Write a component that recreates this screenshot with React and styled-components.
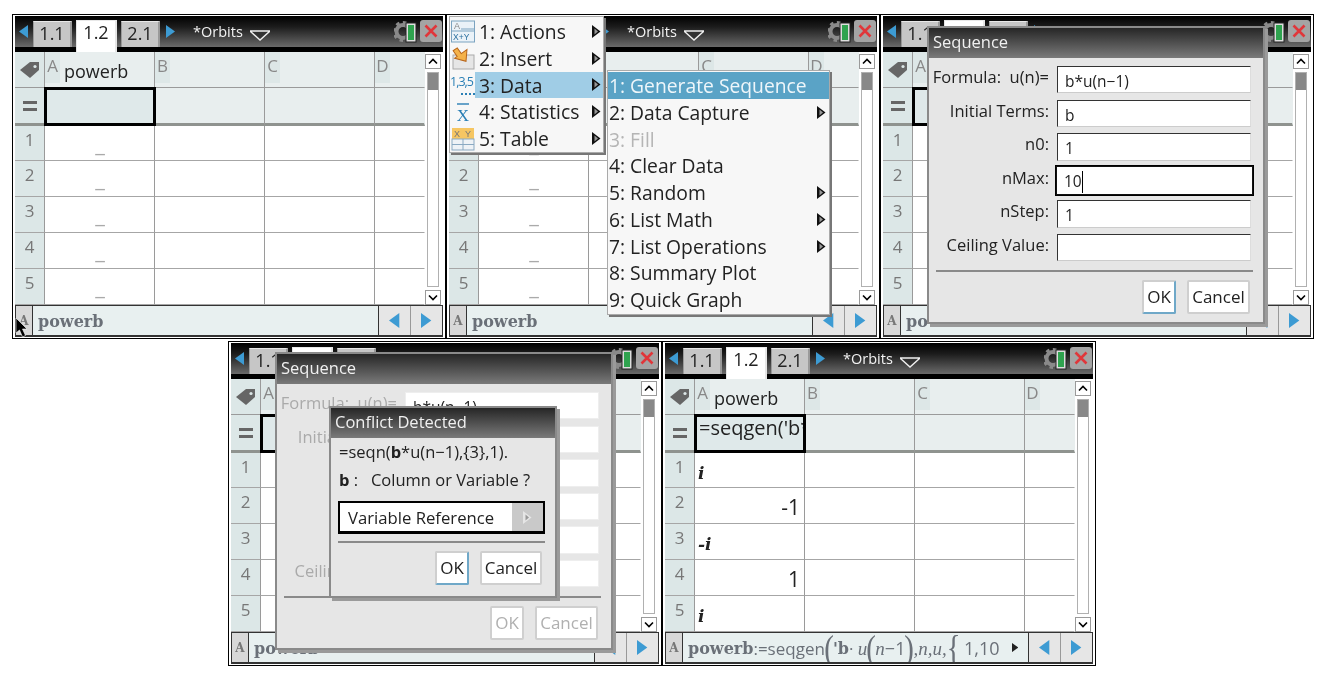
import React from "react";
import styled, { createGlobalStyle } from "styled-components";

const Global = createGlobalStyle`
  html, body { margin: 0; padding: 0; background: #fff; }
  body { font-family: "Open Sans", "DejaVu Sans", sans-serif; }
`;

const Page = styled.div`
  width: 1328px;
  height: 680px;
  padding-top: 14px;
  box-sizing: border-box;
  overflow: hidden;
  display: flex;
  flex-direction: column;
  gap: 2px;
`;
const Row = styled.div`
  display: flex;
  padding-left: ${(p) => p.$left}px;
`;
const Frame = styled.div`
  position: relative;
  width: 434px;
  height: 325px;
  box-sizing: border-box;
  border: 1px solid #000;
  padding: 1px 2px 1px 2px;
  background: #fff;
  display: flex;
  flex-direction: column;
  overflow: hidden;
  filter: blur(0.4px);
`;

/* title bar */
const TitleBar = styled.div`
  height: 31px;
  flex: none;
  border-bottom: 5px solid #000;
  background: linear-gradient(#000 0%, #1c1c1c 35%, #6a6a6a 100%);
  display: flex;
  align-items: flex-end;
  padding-left: 4px;
  position: relative;
`;
const Arrow = styled.svg`
  flex: none;
  align-self: center;
  display: block;
`;
const Tabs = styled.div`
  display: flex;
  gap: 4px;
  margin-left: 5px;
  margin-right: 6px;
  align-items: flex-start;
  height: 100%;
  padding-top: 5px;
  box-sizing: border-box;
`;
const Tab = styled.div`
  width: ${(p) => (p.$on ? 41 : 39)}px;
  height: ${(p) => (p.$on ? 32 : 26)}px;
  margin-top: ${(p) => (p.$on ? -1 : 0)}px;
  box-sizing: border-box;
  background: ${(p) => (p.$on ? "#fff" : "#c6c6c6")};
  border-top: 1px solid #e8e8e8;
  border-right: 2px solid ${(p) => (p.$on ? "#e6e6e6" : "#9a9a9a")};
  border-left: 1px solid ${(p) => (p.$on ? "#e6e6e6" : "#9a9a9a")};
  color: #222;
  font-size: 18px;
  line-height: 22px;
  text-align: center;
  position: relative;
  z-index: 1;
`;
const DocName = styled.div`
  color: #f2f2f2;
  font-size: 14.5px;
  line-height: 20px;
  margin-left: 18px;
  align-self: center;
`;
const Caret = styled.svg`
  margin-left: 7px;
  margin-top: 7px;
  align-self: center;
  flex: none;
`;
const Tools = styled.div`
  margin-left: auto;
  margin-right: 1px;
  align-self: flex-start;
  margin-top: 4px;
  display: flex;
  gap: 2px;
`;
const CloseBox = styled.div`
  width: 22px;
  height: 22px;
  border-radius: 3px;
  background: #a4a4a4;
  display: flex;
  align-items: center;
  justify-content: center;
`;

/* sheet */
const Main = styled.div`
  flex: 1;
  min-height: 0;
  display: flex;
  background: #fff;
`;
const Sheet = styled.div`
  width: 410px;
  display: grid;
  grid-template-columns: 30px 110px 110px 110px 50px;
  grid-template-rows: 36px 38px 34.5px repeat(4, 36.2px);
  overflow: hidden;
`;
const Corner = styled.div`
  background: #dce7e7;
  border-right: 1px solid #9a9a9a;
  border-bottom: 1px solid #9a9a9a;
  display: flex;
  align-items: center;
  justify-content: center;
`;
const EqualCell = styled(Corner)`
  border-bottom: 3px solid #8f938f;
`;
const EqualSign = styled.span`
  width: 14px;
  height: 4px;
  border-top: 3px solid #666;
  border-bottom: 3px solid #666;
`;
const RowHead = styled.div`
  background: #dce7e7;
  border-right: 1px solid #9a9a9a;
  border-bottom: 1px solid #a6a6a6;
  color: #777;
  font-size: 17px;
  text-align: center;
  line-height: 28px;
`;
const ColHead = styled.div`
  background: #e8eeee;
  border-right: 1px solid ${(p) => (p.$last ? "transparent" : "#9a9a9a")};
  border-bottom: 1px solid #9a9a9a;
  display: flex;
  overflow: hidden;
`;
const ColLetter = styled.div`
  width: 15px;
  height: 31px;
  flex: none;
  background: #dde7e7;
  color: #888;
  font-size: 17px;
  line-height: 28px;
  text-align: center;
`;
const ColName = styled.div`
  color: #222;
  font-size: 18px;
  line-height: 38px;
  padding-left: 4px;
`;
const FormulaCell = styled.div`
  background: #e8eeee;
  border-right: 1px solid ${(p) => (p.$last ? "transparent" : "#9a9a9a")};
  border-bottom: 3px solid #8f938f;
  overflow: hidden;
`;
const FormulaHost = styled(FormulaCell)`
  overflow: visible;
`;
const FormulaSel = styled.div`
  background: #dfe9ea;
  border: 3px solid #000;
  margin: -1px -2px -3px -1px;
  height: 39px;
  width: 112px;
  box-sizing: border-box;
  position: relative;
  z-index: 1;
  overflow: hidden;
  white-space: nowrap;
  color: #222;
  font-size: 20px;
  line-height: 21px;
  padding-left: 2px;
`;
const Cell = styled.div`
  background: #fff;
  border-right: 1px solid ${(p) => (p.$last ? "transparent" : "#9a9a9a")};
  border-bottom: 1px solid #a6a6a6;
  color: #222;
  overflow: hidden;
  position: relative;
`;
const EmptyMark = styled.span`
  display: block;
  text-align: center;
  color: #aaa;
  font-size: 22px;
  line-height: 22px;
  padding-top: 6px;
  padding-left: 1px;
`;
const NumberValue = styled.span`
  display: block;
  text-align: right;
  font-size: 21px;
  line-height: 26px;
  padding: 6px 4px 0 0;
`;
const ImagValue = styled.span`
  display: block;
  font-family: "DejaVu Serif", serif;
  font-weight: 700;
  font-style: italic;
  font-size: 17px;
  line-height: 22px;
  padding: 9px 0 0 3px;
`;
const ScrollCol = styled.div`
  flex: 1;
  display: flex;
  flex-direction: column;
  align-items: center;
  padding-top: 2px;
  padding-right: 2px;
`;
const ScrollBtn = styled.div`
  width: 14px;
  height: 13px;
  border: 1px solid #9a9a9a;
  background: #fff;
  display: flex;
  align-items: center;
  justify-content: center;
`;
const Track = styled.div`
  width: 10px;
  height: 216px;
  margin: 3px 0;
  border: 1px solid #b0b0b0;
  background: #fff;
`;
const Thumb = styled.div`
  height: 17px;
  background: #888;
`;

/* bottom bar */
const Bottom = styled.div`
  height: 32px;
  flex: none;
  box-sizing: border-box;
  border: 1px solid #333;
  border-bottom-width: 2px;
  background: #e8f0f0;
  display: flex;
  align-items: stretch;
`;
const RefLabel = styled.div`
  width: 16px;
  flex: none;
  background: #d8d8d8;
  border-right: 1px solid #333;
  color: #777;
  font-family: "DejaVu Serif", serif;
  font-weight: 700;
  font-size: 12px;
  text-align: center;
  line-height: 30px;
`;
const Expr = styled.div`
  flex: 1;
  min-width: 0;
  overflow: hidden;
  padding: 1px 0 0 5px;
  box-sizing: border-box;
  color: #6a7078;
  font-family: "DejaVu Serif", serif;
  font-weight: 700;
  font-size: 16px;
  line-height: 29px;
  white-space: nowrap;
  display: flex;
  align-items: center;
`;
const ExprPlain = styled.span`
  font-weight: 400;
  font-family: "Open Sans", sans-serif;
  font-size: 17px;
`;
const ExprItalic = styled.span`
  font-weight: 400;
  font-style: italic;
  font-family: "Liberation Serif", serif;
  font-size: 19px;
`;
const ExprBig = styled.span`
  font-weight: 400;
  font-family: "Liberation Serif", serif;
  font-size: 36px;
  line-height: 29px;
  margin: 0 -2px;
  transform: scaleX(0.8);
`;
const ExprNum = styled.span`
  font-weight: 400;
  font-family: "Open Sans", sans-serif;
  font-size: 18px;
  margin-left: ${(p) => p.$l || 0}px;
`;
const ExprMore = styled.div`
  flex: none;
  display: flex;
  align-items: center;
  padding: 0 10px 0 6px;
  background: #e8f0f0;
`;
const NavBtn = styled.div`
  width: 31px;
  flex: none;
  background: #e6e6e6;
  border-left: 1px solid ${(p) => (p.$dark ? "#333" : "#999")};
  display: flex;
  align-items: center;
  justify-content: center;
`;

/* menus */
const Menu = styled.div`
  position: absolute;
  z-index: 5;
  background: #f7f7f7;
  box-sizing: border-box;
  left: ${(p) => p.$x}px;
  top: ${(p) => p.$y}px;
  width: ${(p) => p.$w}px;
  border: 1px solid #aaa;
  box-shadow: 2px 2px 0 #777;
  padding: ${(p) => (p.$sub ? "1px 0" : "1px 0 0")};
`;
const MenuItem = styled.div`
  height: 26.8px;
  display: flex;
  align-items: center;
  padding: ${(p) => (p.$sub ? "0 3px 0 1px" : "0 2px 0 0")};
  font-size: 19.3px;
  line-height: 30px;
  color: ${(p) => (p.$off ? "#b5b5b5" : p.$light ? "#eef6fa" : "#222")};
  background: ${(p) => p.$bg || "transparent"};
  white-space: nowrap;
`;
const MenuIcon = styled.div`
  width: 25px;
  flex: none;
  margin-right: 4px;
  background: #f7f7f7;
  align-self: stretch;
  display: flex;
  align-items: center;
  justify-content: center;
`;
const MenuText = styled.span`
  flex: 1;
  padding-top: 1px;
`;
const SubArrow = styled.svg`
  flex: none;
`;

/* dialogs */
const Dialog = styled.div`
  position: absolute;
  z-index: ${(p) => p.$z};
  left: ${(p) => p.$x}px;
  top: ${(p) => p.$y}px;
  width: ${(p) => p.$w}px;
  height: ${(p) => p.$h}px;
  box-sizing: border-box;
  border: 2px solid #8a8a8a;
  box-shadow: 3px 3px 0 #9a9a9a;
  background: #e6e6e6;
  display: flex;
  flex-direction: column;
`;
const DialogTitle = styled.div`
  height: 30px;
  flex: none;
  background: linear-gradient(#262626, #7a7a7a);
  color: #f0f0f0;
  font-size: 16.5px;
  line-height: 28px;
  padding-left: 4px;
`;
const Form = styled.div`
  padding: 8px 12px 0 8px;
  display: flex;
  flex-direction: column;
  gap: 6.2px;
`;
const FormRow = styled.div`
  display: flex;
  height: 27.4px;
  gap: 8px;
`;
const FieldLabel = styled.div`
  width: 112px;
  flex: none;
  text-align: right;
  white-space: pre;
  font-size: 16.5px;
  line-height: 22px;
  color: ${(p) => (p.$dim ? "#aaa" : "#222")};
  display: flex;
  justify-content: flex-end;
`;
const Field = styled.div`
  flex: 1;
  box-sizing: border-box;
  background: #fff;
  border-top: 1px solid #333;
  border-left: 1px solid #333;
  border-right: 1px solid #ddd;
  border-bottom: 1px solid #ccc;
  font-size: 15.5px;
  line-height: 29px;
  padding-left: 7px;
  color: #222;
  white-space: nowrap;
  overflow: hidden;
  ${(p) => p.$dim && "border-color:#eee;"}
  ${(p) => p.$focus && "outline:1px solid #000; border:1px solid #111; margin:-1px; flex:none; width:197px; height:29.4px;"}
`;
const TextCaret = styled.span`
  display: inline-block;
  width: 1px;
  height: 22px;
  background: #000;
  vertical-align: -6px;
`;
const Rule = styled.div`
  height: 2px;
  background: #8a8a8a;
  margin: ${(p) => p.$m};
`;
const Buttons = styled.div`
  display: flex;
  justify-content: flex-end;
  gap: 11px;
  padding-right: ${(p) => p.$r}px;
  margin-top: 8px;
`;
const Button = styled.div`
  width: ${(p) => p.$w}px;
  height: 34px;
  box-sizing: border-box;
  background: #fff;
  border: 2px solid #cfcfcf;
  border-radius: 2px;
  ${(p) => p.$focus && "border-right-color:#6fa8c8; border-bottom-color:#6fa8c8;"}
  color: ${(p) => (p.$dim ? "#b0b0b0" : "#222")};
  font-size: 17px;
  line-height: 30px;
  text-align: center;
`;
const ConflictText = styled.div`
  padding: 0 8px;
  font-size: 16.5px;
  line-height: 20px;
  color: #222;
  white-space: pre;
  margin-top: ${(p) => p.$t}px;
`;
const Strong = styled.b`
  font-weight: 700;
`;
const Select = styled.div`
  margin: 11px 10px 0 7px;
  height: 33px;
  box-sizing: border-box;
  border: 2px solid #000;
  border-bottom-width: 3px;
  background: #fff;
  display: flex;
`;
const SelectText = styled.div`
  flex: 1;
  font-size: 16.7px;
  line-height: 30px;
  padding-left: 8px;
  color: #222;
`;
const SelectBtn = styled.div`
  width: 31px;
  background: #c9c9c9;
  display: flex;
  align-items: center;
  justify-content: center;
`;
const Pointer = styled.svg`
  position: absolute;
  left: 2px;
  bottom: -1px;
  z-index: 6;
`;

/* icons */
const ArrowL = ({ c = "#3d9bd3", s = 1 }) => (
  <Arrow width={9 * s} height={13 * s} viewBox="0 0 9 13">
    <path d="M9 0v13L0 6.5z" fill={c} />
  </Arrow>
);
const ArrowR = ({ c = "#3d9bd3", s = 1 }) => (
  <Arrow width={9 * s} height={13 * s} viewBox="0 0 9 13">
    <path d="M0 0v13l9-6.5z" fill={c} />
  </Arrow>
);
const TagIcon = () => (
  <svg width="20" height="18" viewBox="0 0 20 18">
    <path d="M0 9 10 1h9v8l-9 8z" fill="#666" />
    <circle cx="15" cy="5.5" r="1.6" fill="#dce7e7" />
  </svg>
);
const GearBattery = () => (
  <svg width="24" height="23" viewBox="0 0 24 23">
    <circle cx="9" cy="11.5" r="6.5" fill="none" stroke="#8a8a8a" strokeWidth="4" />
    <circle cx="9" cy="11.5" r="9" fill="none" stroke="#8a8a8a" strokeWidth="3" strokeDasharray="3.5 3.5" />
    <rect x="12" y="3" width="10" height="19" fill="#ddd" stroke="#222" />
    <rect x="14" y="5" width="6" height="15" fill="#2fa34f" />
  </svg>
);
const CloseIcon = () => (
  <svg width="14" height="14" viewBox="0 0 14 14">
    <path d="M1.5 1.5l11 11M12.5 1.5l-11 11" stroke="#e0363a" strokeWidth="2.6" />
  </svg>
);
const ChevUp = () => (
  <svg width="10" height="7" viewBox="0 0 10 7">
    <path d="M1 5.5 5 1.5l4 4" fill="none" stroke="#000" strokeWidth="1.6" />
  </svg>
);
const ChevDown = () => (
  <svg width="10" height="7" viewBox="0 0 10 7">
    <path d="M1 1.5 5 5.5l4-4" fill="none" stroke="#000" strokeWidth="1.6" />
  </svg>
);
const SubTri = ({ c = "#111" }) => (
  <SubArrow width="9" height="13" viewBox="0 0 9 13">
    <path d="M0 0v13l8.5-6.5z" fill={c} />
    <path d="M2.5 3.5v6l3.5-3z" fill="#999" />
  </SubArrow>
);
const ActionsIcon = () => (
  <svg width="24" height="24" viewBox="0 0 24 24">
    <rect x="0.5" y="2" width="23" height="21" fill="#eaf2f8" stroke="#7ba3c0" />
    <path d="M10 10h13M1 12h22" stroke="#7ba3c0" />
    <text x="3" y="10" fontSize="9" fontFamily="Liberation Sans" fill="#888">A</text>
    <text x="2" y="21" fontSize="8.5" fontFamily="Liberation Sans" fill="#2a6f9e">X+Y</text>
  </svg>
);
const InsertIcon = () => (
  <svg width="24" height="24" viewBox="0 0 24 24">
    <rect x="2" y="9" width="21" height="14" fill="#e6e6e6" stroke="#aaa" />
    <path d="M6 1h5v7h7l-7.5 9L3 8h3z" transform="rotate(-35 10 9)" fill="#f4b24a" stroke="#b8651a" />
  </svg>
);
const DataIcon = () => (
  <svg width="24" height="24" viewBox="0 0 24 24">
    <text x="-1" y="13" fontSize="12.5" fontFamily="Open Sans" fill="#2a7fb5" letterSpacing="-1">1,3,5</text>
    <path d="M10 21h2M14 21h2M18 21h2M22 21h2" stroke="#2a7fb5" strokeWidth="2" />
  </svg>
);
const StatsIcon = () => (
  <svg width="24" height="24" viewBox="0 0 24 24">
    <path d="M6 4h12" stroke="#2a7fb5" strokeWidth="1.4" />
    <text x="12" y="21" textAnchor="middle" fontSize="17" fontFamily="Liberation Serif" fill="#2a7fb5">X</text>
  </svg>
);
const TableIcon = () => (
  <svg width="24" height="24" viewBox="0 0 24 24">
    <rect x="1" y="1" width="22" height="11" fill="#f6c662" />
    <rect x="1" y="12" width="22" height="11" fill="#eef2f6" stroke="#8aa9c2" />
    <path d="M12 12v11M1 17.5h22" stroke="#8aa9c2" />
    <text x="3" y="10" fontSize="9" fontFamily="Liberation Sans" fill="#777">X</text>
    <text x="14" y="10" fontSize="9" fontFamily="Liberation Sans" fill="#777">Y</text>
  </svg>
);

const COLS = ["B", "C", "D"];
const ROWS = [1, 2, 3, 4, 5];

function ScreenTitle() {
  return (
    <TitleBar>
      <ArrowL />
      <Tabs>
        <Tab>1.1</Tab>
        <Tab $on>1.2</Tab>
        <Tab>2.1</Tab>
      </Tabs>
      <ArrowR />
      <DocName>*Orbits</DocName>
      <Caret width="20" height="11" viewBox="0 0 20 11">
        <path d="M0 1h20L10 10z" fill="#333" stroke="#eee" strokeWidth="1.4" />
      </Caret>
      <Tools>
        <GearBattery />
        <CloseBox>
          <CloseIcon />
        </CloseBox>
      </Tools>
    </TitleBar>
  );
}

function Values({ r, values }) {
  if (!values) return <EmptyMark>_</EmptyMark>;
  const v = values[r - 1];
  if (v.type === "num") return <NumberValue>{v.text}</NumberValue>;
  return <ImagValue>{v.text}</ImagValue>;
}

function Grid({ formula, values }) {
  return (
    <Main>
      <Sheet>
        <Corner>
          <TagIcon />
        </Corner>
        <ColHead>
          <ColLetter>A</ColLetter>
          <ColName>powerb</ColName>
        </ColHead>
        {COLS.map((c, i) => (
          <ColHead key={c} $last={i === 2}>
            <ColLetter>{c}</ColLetter>
          </ColHead>
        ))}
        <EqualCell>
          <EqualSign />
        </EqualCell>
        <FormulaHost>
          <FormulaSel>{formula}</FormulaSel>
        </FormulaHost>
        <FormulaCell />
        <FormulaCell />
        <FormulaCell $last />
        {ROWS.map((r) => (
          <React.Fragment key={r}>
            <RowHead>{r}</RowHead>
            <Cell>
              <Values r={r} values={values} />
            </Cell>
            <Cell />
            <Cell />
            <Cell $last />
          </React.Fragment>
        ))}
      </Sheet>
      <ScrollCol>
        <ScrollBtn>
          <ChevUp />
        </ScrollBtn>
        <Track>
          <Thumb />
        </Track>
        <ScrollBtn>
          <ChevDown />
        </ScrollBtn>
      </ScrollCol>
    </Main>
  );
}

function BottomBar({ children, more }) {
  return (
    <Bottom>
      <RefLabel>A</RefLabel>
      <Expr>{children || "powerb"}</Expr>
      {more && (
        <ExprMore>
          <ArrowR c="#222" s={0.7} />
        </ExprMore>
      )}
      <NavBtn $dark>
        <ArrowL s={1.15} />
      </NavBtn>
      <NavBtn>
        <ArrowR s={1.15} />
      </NavBtn>
    </Bottom>
  );
}

function SequenceDialog({ dim }) {
  const rows = [
    ["Formula:  u(n)=", "b*u(n\u22121)"],
    ["Initial Terms:", "b"],
    ["n0:", "1"],
    ["nMax:", "10"],
    ["nStep:", "1"],
    ["Ceiling Value:", ""],
  ];
  return (
    <Dialog $x={46} $y={dim ? 10 : 11} $w={338} $h={298} $z={3}>
      <DialogTitle>Sequence</DialogTitle>
      <Form>
        {rows.map(([l, v]) => (
          <FormRow key={l}>
            <FieldLabel $dim={dim}>{l}</FieldLabel>
            <Field $dim={dim} $focus={!dim && l === "nMax:"}>
              {v}
              {!dim && l === "nMax:" && <TextCaret />}
            </Field>
          </FormRow>
        ))}
      </Form>
      <Rule $m="9px 10px 0 7px" />
      <Buttons $r={13}>
        <Button $w={34} $dim={dim} $focus={!dim}>OK</Button>
        <Button $w={63} $dim={dim}>Cancel</Button>
      </Buttons>
    </Dialog>
  );
}

function ConflictDialog() {
  return (
    <Dialog $x={100} $y={64} $w={228} $h={192} $z={4}>
      <DialogTitle>Conflict Detected</DialogTitle>
      <ConflictText $t={4}>
        =seqn(<Strong>b</Strong>*u(n−1),{"{3}"},1).
      </ConflictText>
      <ConflictText $t={8}>
        <Strong>b</Strong>{" :   Column or Variable ?"}
      </ConflictText>
      <Select>
        <SelectText>Variable Reference</SelectText>
        <SelectBtn>
          <SubTri c="#e6e6e6" />
        </SelectBtn>
      </Select>
      <Rule $m="7px 10px 0 7px" />
      <Buttons $r={13}>
        <Button $w={34} $focus>OK</Button>
        <Button $w={62}>Cancel</Button>
      </Buttons>
    </Dialog>
  );
}

const MAIN_MENU = [
  ["1: Actions", <ActionsIcon />],
  ["2: Insert", <InsertIcon />],
  ["3: Data", <DataIcon />],
  ["4: Statistics", <StatsIcon />],
  ["5: Table", <TableIcon />],
];
const SUB_MENU = [
  ["1: Generate Sequence", false],
  ["2: Data Capture", true],
  ["3: Fill", false],
  ["4: Clear Data", false],
  ["5: Random", true],
  ["6: List Math", true],
  ["7: List Operations", true],
  ["8: Summary Plot", false],
  ["9: Quick Graph", false],
];

function Menus() {
  return (
    <>
      <Menu $x={2} $y={1} $w={155}>
        {MAIN_MENU.map(([t, icon], i) => (
          <MenuItem key={t} $bg={i === 2 ? "#a0cde6" : undefined}>
            <MenuIcon>{icon}</MenuIcon>
            <MenuText>{t}</MenuText>
            <SubTri />
          </MenuItem>
        ))}
      </Menu>
      <Menu $x={160} $y={55} $w={223} $sub>
        {SUB_MENU.map(([t, more], i) => (
          <MenuItem key={t} $sub $off={i === 2} $light={i === 0} $bg={i === 0 ? "#5aa3c6" : undefined}>
            <MenuText>{t}</MenuText>
            {more && <SubTri />}
          </MenuItem>
        ))}
      </Menu>
    </>
  );
}

const SEQ = [
  { type: "imag", text: "i" },
  { type: "num", text: "-1" },
  { type: "imag", text: "-i" },
  { type: "num", text: "1" },
  { type: "imag", text: "i" },
];

export default function App() {
  return (
    <Page>
      <Global />
      <Row $left={12}>
        <Frame>
          <ScreenTitle />
          <Grid />
          <BottomBar />
          <Pointer width="12" height="22" viewBox="0 0 12 22">
            <path d="M1 1v15l3.5-3 3 7 3-1.5-3-6.5H12z" fill="#000" stroke="#fff" strokeWidth="0.6" />
          </Pointer>
        </Frame>
        <Frame>
          <ScreenTitle />
          <Grid />
          <BottomBar />
          <Menus />
        </Frame>
        <Frame>
          <ScreenTitle />
          <Grid />
          <BottomBar />
          <SequenceDialog />
        </Frame>
      </Row>
      <Row $left={228}>
        <Frame>
          <ScreenTitle />
          <Grid />
          <BottomBar />
          <SequenceDialog dim />
          <ConflictDialog />
        </Frame>
        <Frame>
          <ScreenTitle />
          <Grid formula="=seqgen('b*" values={SEQ} />
          <BottomBar more>
            powerb<ExprPlain>:=seqgen</ExprPlain>
            <ExprBig>(</ExprBig>'b<ExprPlain>·&nbsp;</ExprPlain>
            <ExprItalic>u</ExprItalic>
            <ExprBig>(</ExprBig>
            <ExprItalic>n</ExprItalic>
            <ExprNum>−1</ExprNum>
            <ExprBig>)</ExprBig>
            <ExprItalic>,n,u,</ExprItalic>
            <ExprBig>{"{"}</ExprBig>
            <ExprNum $l={4}>1,10</ExprNum>
          </BottomBar>
        </Frame>
      </Row>
    </Page>
  );
}
